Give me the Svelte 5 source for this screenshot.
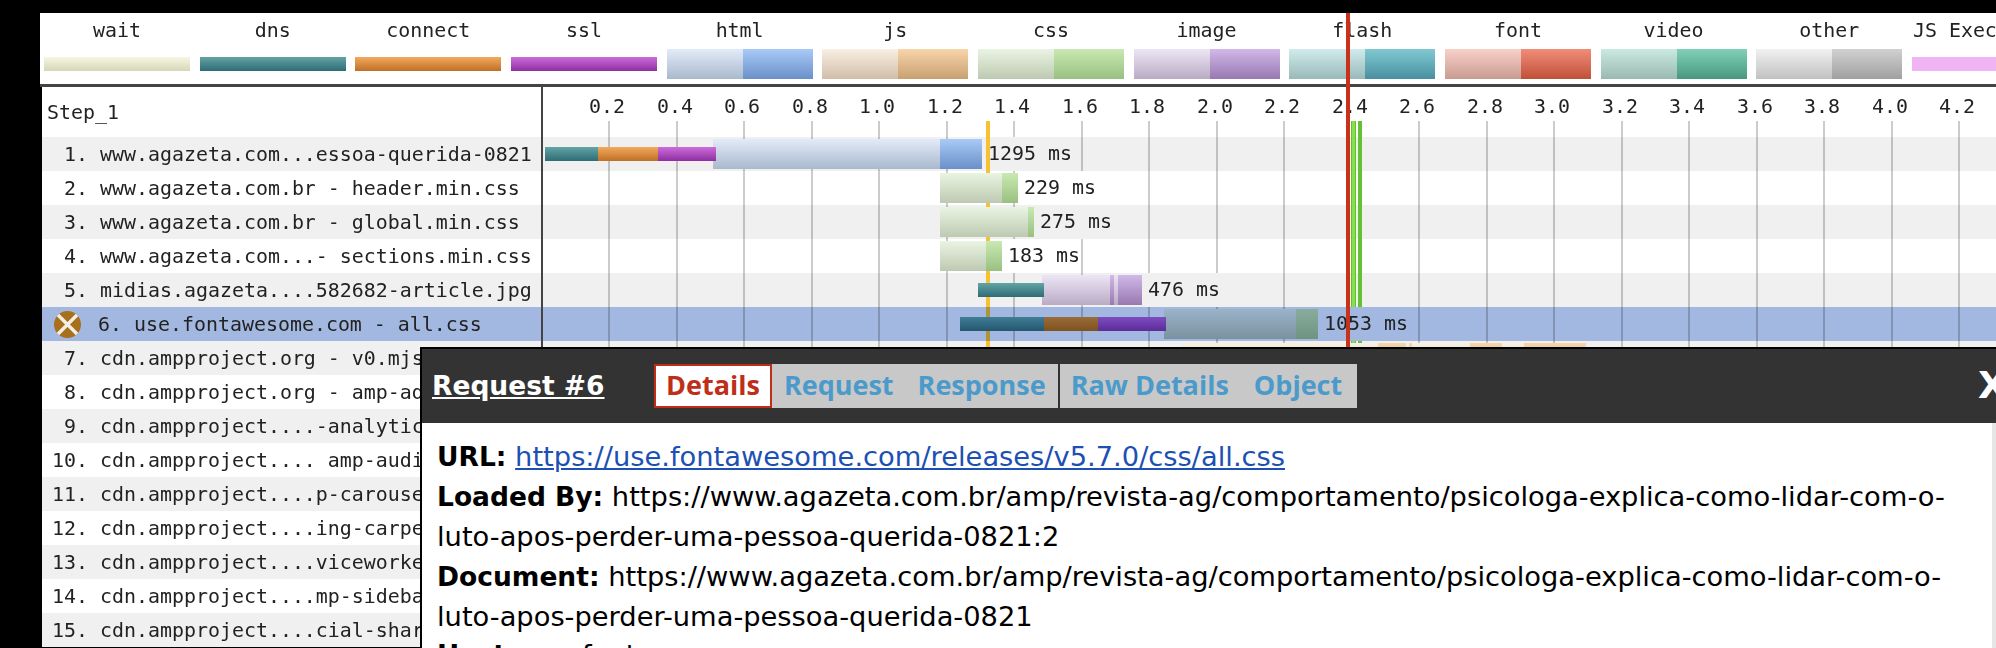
<script>
  // Waterfall chart with a request-details popup over it. Bars, ticks and
  // marker lines are positioned from data in page pixels.
  const legend = [
    { label: 'wait', kinds: ['wait'] },
    { label: 'dns', kinds: ['dns'] },
    { label: 'connect', kinds: ['connect'] },
    { label: 'ssl', kinds: ['ssl'] },
    { label: 'html', kinds: ['html-l', 'html-d'] },
    { label: 'js', kinds: ['js-l', 'js-d'] },
    { label: 'css', kinds: ['css-l', 'css-d'] },
    { label: 'image', kinds: ['image-l', 'image-d'] },
    { label: 'flash', kinds: ['flash-l', 'flash-d'] },
    { label: 'font', kinds: ['font-l', 'font-d'] },
    { label: 'video', kinds: ['video-l', 'video-d'] },
    { label: 'other', kinds: ['other-l', 'other-d'] },
    { label: 'JS Execution', kinds: ['exec'] },
  ];

  const THIN = ['dns', 'connect', 'ssl'];
  const bar = (kind, from, to) => ({ kind, from, to, thin: THIN.includes(kind) });

  const rows = [
    {
      text: 'www.agazeta.com...essoa-querida-0821',
      ms: 1295,
      end: 982,
      bars: [
        bar('dns', 545, 598),
        bar('connect', 598, 658),
        bar('html-l', 713, 940),
        bar('html-d', 940, 982),
        bar('ssl', 658, 716),
      ],
    },
    {
      text: 'www.agazeta.com.br - header.min.css',
      ms: 229,
      end: 1018,
      bars: [bar('css-l', 940, 1002), bar('css-d', 1002, 1018)],
    },
    {
      text: 'www.agazeta.com.br - global.min.css',
      ms: 275,
      end: 1034,
      bars: [bar('css-l', 940, 1028), bar('css-d', 1028, 1034)],
    },
    {
      text: 'www.agazeta.com...- sections.min.css',
      ms: 183,
      end: 1002,
      bars: [bar('css-l', 940, 986), bar('css-d', 986, 1002)],
    },
    {
      text: 'midias.agazeta....582682-article.jpg',
      ms: 476,
      end: 1142,
      bars: [
        bar('image-l', 1042, 1142),
        bar('image-d', 1110, 1114),
        bar('image-d', 1118, 1142),
        bar('dns', 978, 1044),
      ],
    },
    {
      text: 'use.fontawesome.com - all.css',
      ms: 1053,
      end: 1318,
      selected: true,
      bars: [
        bar('css-l', 1164, 1296),
        bar('css-d', 1296, 1318),
        bar('dns', 960, 1044),
        bar('connect', 1044, 1098),
        bar('ssl', 1098, 1166),
      ],
    },
    {
      text: 'cdn.ampproject.org - v0.mjs',
      bars: [
        bar('js-l', 1182, 1586),
        bar('js-d', 1378, 1406),
        bar('js-d', 1409, 1412),
        bar('js-d', 1470, 1502),
        bar('js-d', 1524, 1586),
      ],
    },
    { text: 'cdn.ampproject.org - amp-ad-0.1.mjs', bars: [] },
    { text: 'cdn.ampproject....-analytics-0.1.mjs', bars: [] },
    { text: 'cdn.ampproject.... amp-audio-0.1.mjs', bars: [] },
    { text: 'cdn.ampproject....p-carousel-0.1.mjs', bars: [] },
    { text: 'cdn.ampproject....ing-carpet-0.1.mjs', bars: [] },
    { text: 'cdn.ampproject....viceworker-0.1.mjs', bars: [] },
    { text: 'cdn.ampproject....mp-sidebar-0.1.mjs', bars: [] },
    { text: 'cdn.ampproject....cial-share-0.2.mjs', bars: [] },
  ];

  const ticks = Array.from({ length: 21 }, (_, i) => {
    const t = (i + 1) * 0.2;
    return { label: t.toFixed(1), x: Math.round(541.5 + 337.5 * t) };
  });

  const TRACK_X = 543; // inner left edge of the timeline column
  const pad = (n) => String(n).padStart(2, ' ');
  const tabs = ['Request', 'Response'];
</script>

<div class="page">
  <div class="legend">
    {#each legend as item}
      <div class="legend-cell">
        <div class="mono legend-label">{item.label}</div>
        <div class="legend-swatch">
          {#each item.kinds as kind}
            <span class="swatch {kind}"></span>
          {/each}
        </div>
      </div>
    {/each}
  </div>
  <div class="rule"></div>

  <!-- ticks come first so the rows' labels paint over them -->
  {#each ticks as tick}
    <div class="tick" style="left: {tick.x - 1}px"></div>
    <div class="mono tick-label" style="left: {tick.x - 2}px">{tick.label}</div>
  {/each}

  <div class="marker yellow" style="top: 121px; height: 186px"></div>
  <div class="marker yellow dim" style="top: 307px; height: 34px"></div>
  <div class="marker yellow" style="top: 341px; height: 6px"></div>
  <div class="marker green-a" style="top: 121px; height: 186px"></div>
  <div class="marker green-b" style="top: 121px; height: 186px"></div>
  <div class="marker green-a" style="top: 341px; height: 6px"></div>
  <div class="marker green-b" style="top: 341px; height: 6px"></div>
  <div class="marker red"></div>

  <div class="table">
    <div class="row head">
      <div class="name mono step">Step_1</div>
      <div class="track"></div>
    </div>
    {#each rows as row, i}
      <div class="row" class:odd={i % 2 === 0} class:sel={row.selected}>
        <div class="name mono">
          {#if row.selected}
            <svg class="err" viewBox="0 0 27 27" aria-hidden="true">
              <circle cx="13.5" cy="13.5" r="13.5" fill="#a8701c" />
              <path d="M4 4 L23 23 M23 4 L4 23" stroke="#f4efe6" stroke-width="3.4" />
            </svg>
            <span>{i + 1}. {row.text}</span>
          {:else}
            <span>{pad(i + 1)}. {row.text}</span>
          {/if}
        </div>
        <div class="track">
          {#each row.bars as b}
            <span
              class="bar {b.kind}"
              class:thin={b.thin}
              style="left: {b.from - TRACK_X}px; width: {b.to - b.from}px"
            ></span>
          {/each}
          {#if row.ms}
            <span class="mono ms" style="left: {row.end + 6 - TRACK_X}px">{row.ms} ms</span>
          {/if}
        </div>
      </div>
    {/each}
  </div>

  <div class="popup">
    <div class="popup-head">
      <a class="title" href="#request">Request #6</a>
      <div class="tabs">
        <span class="tab active">Details</span>
        {#each tabs as tab}
          <span class="tab">{tab}</span>
        {/each}
        <span class="tab-sep"></span>
        <span class="tab raw">Raw Details</span>
        <span class="tab obj">Object</span>
      </div>
      <span class="close">X</span>
    </div>
    <div class="popup-body">
      <div><b>URL:</b> <a href="#url">https://use.fontawesome.com/releases/v5.7.0/css/all.css</a></div>
      <div><b>Loaded By:</b> https://www.agazeta.com.br/amp/revista-ag/comportamento/psicologa-explica-como-lidar-com-o-luto-apos-perder-uma-pessoa-querida-0821:2</div>
      <div><b>Document:</b> https://www.agazeta.com.br/amp/revista-ag/comportamento/psicologa-explica-como-lidar-com-o-luto-apos-perder-uma-pessoa-querida-0821</div>
      <div class="host"><b>Host:</b> use.fontawesome.com</div>
    </div>
  </div>
</div>

<style>
  :global(body) {
    margin: 0;
    background: #000;
  }
  .page {
    position: relative;
    width: 1996px;
    height: 648px;
    padding-top: 13px;
    box-sizing: border-box;
    overflow: hidden;
    background: #000;
  }
  .mono {
    font-family: 'DejaVu Sans Mono', monospace;
    font-size: 19.93px;
    color: #222;
    white-space: pre;
    filter: blur(0.35px);
  }

  /* legend */
  .legend {
    display: grid;
    grid-template-columns: repeat(13, 146px);
    column-gap: 9.67px;
    height: 71px;
    margin-left: 40px;
    padding-left: 4px;
    background: #fff;
  }
  .legend-label {
    height: 34px;
    line-height: 36px;
    text-align: center;
  }
  .legend-swatch {
    display: flex;
    align-items: center;
    height: 30px;
    margin-top: 2px;
  }
  .swatch {
    flex: 76;
    height: 30px;
  }
  .swatch:nth-child(2) {
    flex: 70;
  }
  .swatch.wait,
  .swatch.dns,
  .swatch.connect,
  .swatch.ssl,
  .swatch.exec {
    height: 14px;
  }
  .rule {
    height: 3px;
    margin-left: 40px;
    background: #444;
  }

  /* table rows */
  .table {
    margin-left: 42px;
    background: #fff;
  }
  .row {
    display: flex;
    height: 34px;
    background: #fff;
  }
  .row.head {
    height: 50px;
  }
  .row.odd {
    background: #f0f0f0;
  }
  .row.sel {
    background: #a3b8e0;
  }
  .name {
    display: flex;
    align-items: center;
    box-sizing: border-box;
    width: 499px;
    padding-left: 10px;
    overflow: hidden;
  }
  .step {
    padding-left: 5px;
  }
  .sel .name {
    padding-left: 12px;
    gap: 17px;
  }
  .err {
    flex: none;
    width: 27px;
    height: 27px;
  }
  .track {
    position: relative;
    flex: 1;
    border-left: 2px solid #444;
  }

  /* timeline */
  .tick {
    position: absolute;
    top: 121px;
    height: 226px;
    width: 2px;
    background: rgba(0, 0, 0, 0.2);
  }
  .tick-label {
    position: absolute;
    top: 94px;
    line-height: 26px;
    transform: translateX(-50%);
  }
  .marker {
    position: absolute;
    z-index: 1;
  }
  .yellow {
    left: 986px;
    width: 4px;
    background: #f6c233;
  }
  .yellow.dim {
    background: #ad953c;
  }
  .green-a {
    left: 1351px;
    width: 5px;
    background: #86e04e;
    box-shadow: inset 1px 0 #62c035, inset -1px 0 #62c035;
  }
  .green-b {
    left: 1358px;
    width: 4px;
    background: #64c232;
  }
  .red {
    z-index: 3;
    left: 1346px;
    top: 13px;
    width: 4px;
    height: 334px;
    background: #c9321a;
  }
  .bar {
    position: absolute;
    z-index: 2;
    top: 2px;
    height: 30px;
  }
  .bar.thin {
    top: 10px;
    height: 14px;
  }
  .ms {
    position: absolute;
    top: 0;
    line-height: 34px;
    background: #fff;
  }
  .odd .ms {
    background: #f0f0f0;
  }
  .sel .ms {
    background: #a3b8e0;
  }

  /* request colours */
  .wait { background: linear-gradient(#f8f6e2, #d6d6b8); }
  .dns { background: linear-gradient(#62a4a4, #2f6c76); }
  .connect { background: linear-gradient(#f2aa5c, #bf6f28); }
  .ssl { background: linear-gradient(#cc6cdc, #8e2ea0); }
  .html-l { background: linear-gradient(#e2ebf9, #a9b9cd); }
  .html-d { background: linear-gradient(#a9caf8, #6a90c8); }
  .js-l { background: linear-gradient(#f9efe2, #d1bda9); }
  .js-d { background: linear-gradient(#f8d5aa, #c8a070); }
  .css-l { background: linear-gradient(#e9f5e2, #bdc9b1); }
  .css-d { background: linear-gradient(#c9e9b2, #98c080); }
  .image-l { background: linear-gradient(#ede5f5, #b9abc5); }
  .image-d { background: linear-gradient(#d1b9e9, #9878b0); }
  .flash-l { background: linear-gradient(#d1ebed, #99b9b9); }
  .flash-d { background: linear-gradient(#81c9d1, #4890a0); }
  .font-l { background: linear-gradient(#f8d1c9, #c99b91); }
  .font-d { background: linear-gradient(#f18d79, #c05038); }
  .video-l { background: linear-gradient(#c9e9e1, #99b9b1); }
  .video-d { background: linear-gradient(#81d1b9, #489880); }
  .other-l { background: linear-gradient(#f1f1f1, #c1c1c1); }
  .other-d { background: linear-gradient(#d1d1d1, #a0a0a0); }
  .exec { background: #f0b4f4; }
  .sel .dns { background: linear-gradient(#3e7e96, #24566f); }
  .sel .connect { background: linear-gradient(#9a6c38, #7c5220); }
  .sel .ssl { background: linear-gradient(#7e4cc0, #5c2c98); }
  .sel .css-l { background: linear-gradient(#9ab3c8, #7a92a0); }
  .sel .css-d { background: linear-gradient(#88ad9e, #6e9480); }

  /* popup */
  .popup {
    position: absolute;
    z-index: 4;
    top: 347px;
    left: 420px;
    width: 1640px;
    height: 340px;
    border-top: 2px solid #000;
    border-left: 2px solid #000;
    background: #fff;
    font-family: 'DejaVu Sans', sans-serif;
    color: #000;
  }
  .popup-head {
    position: relative;
    display: flex;
    align-items: center;
    height: 74px;
    padding-left: 10px;
    background: #333;
  }
  .title {
    width: 222px;
    flex: none;
    margin-top: -2px;
    color: #fff;
    font-size: 26.5px;
    font-weight: 700;
  }
  .tabs {
    display: flex;
    align-items: stretch;
    height: 44px;
    background: #c8c8c8;
    font-family: 'Open Sans', sans-serif;
    font-size: 27px;
    font-weight: 700;
    line-height: 42px;
    color: #4a9acb;
  }
  .tab {
    padding: 0 12px;
  }
  .tab.active {
    box-sizing: border-box;
    padding: 0 10px;
    border: 2px solid #bf2e17;
    background: #fff;
    color: #bf2e17;
    line-height: 38px;
  }
  .tab.raw {
    padding: 0 11px;
  }
  .tab.obj {
    padding: 0 15px 0 14px;
  }
  .tab-sep {
    width: 2px;
    background: #333;
  }
  .close {
    position: absolute;
    left: 1556px;
    top: 14px;
    color: #fff;
    font-size: 38px;
    font-weight: 700;
  }
  .popup-body {
    box-sizing: border-box;
    width: 1574px;
    height: 266px;
    padding: 14px 26px 0 15px;
    border-right: 4px solid #e6e6e6;
    font-size: 27.3px;
    line-height: 40px;
  }
  .popup-body b {
    font-size: 26.5px;
  }
  .popup-body a {
    color: #1c50b4;
  }
  .host {
    margin-top: -2px;
  }
</style>
